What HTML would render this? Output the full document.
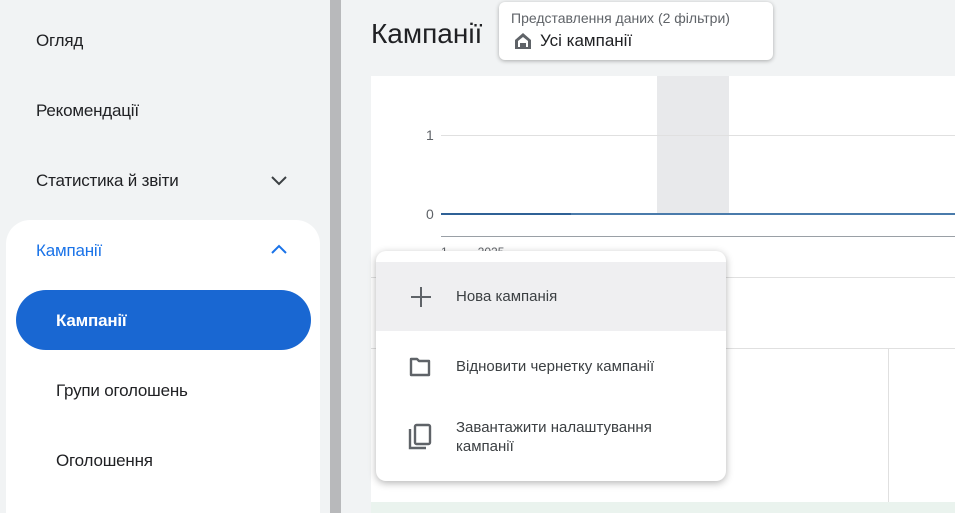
<!DOCTYPE html>
<html><head><meta charset="utf-8"><style>
*{margin:0;padding:0;box-sizing:border-box}
html,body{width:955px;height:513px;overflow:hidden}
body{background:#f1f3f4;font-family:"Liberation Sans",sans-serif;position:relative;color:#202124}
.abs{position:absolute}
.nav{font-size:17px;color:#202124;font-weight:500;letter-spacing:-0.2px}
</style></head><body>
<div class="abs" style="left:0;top:0;width:330px;height:513px;background:#f1f3f4"></div>
<div class="abs nav" style="left:36px;top:31px">Огляд</div>
<div class="abs nav" style="left:36px;top:101px">Рекомендації</div>
<div class="abs nav" style="left:36px;top:171px">Статистика й звіти</div>
<svg class="abs" style="left:270px;top:173px" width="18" height="14" viewBox="0 0 18 14"><path d="M2 4l7 7 7-7" fill="none" stroke="#3c4043" stroke-width="2"/></svg>
<div class="abs" style="left:6px;top:220px;width:314px;height:293px;background:#fff;border-radius:24px 24px 0 0"></div>
<div class="abs nav" style="left:36px;top:241px;color:#1a73e8">Кампанії</div>
<svg class="abs" style="left:270px;top:242px" width="18" height="14" viewBox="0 0 18 14"><path d="M2 11l7-7 7 7" fill="none" stroke="#1a73e8" stroke-width="2"/></svg>
<div class="abs" style="left:16px;top:290px;width:295px;height:60px;background:#1967d2;border-radius:30px"></div>
<div class="abs nav" style="left:56px;top:311px;color:#fff;font-weight:700">Кампанії</div>
<div class="abs nav" style="left:56px;top:381px">Групи оголошень</div>
<div class="abs nav" style="left:56px;top:451px">Оголошення</div>
<div class="abs" style="left:330px;top:0;width:11px;height:513px;background:#b8b9bb"></div>
<div class="abs" style="left:371px;top:18px;font-size:28px;color:#202124">Кампанії</div>
<div class="abs" style="left:371px;top:76px;width:584px;height:437px;background:#fff"></div>
<div class="abs" style="left:657px;top:76px;width:72px;height:138px;background:#e8e9eb"></div>
<div class="abs" style="left:441px;top:135px;width:514px;height:1px;background:#e0e0e0"></div>
<div class="abs" style="left:426px;top:127px;font-size:14px;color:#5f6368">1</div>
<div class="abs" style="left:426px;top:206px;font-size:14px;color:#5f6368">0</div>
<div class="abs" style="left:441px;top:213px;width:514px;height:2px;background:#4a7bab"></div>
<div class="abs" style="left:441px;top:213px;width:130px;height:2px;background:#2f6196"></div>
<div class="abs" style="left:441px;top:236px;width:514px;height:1px;background:#9aa0a6"></div>
<div class="abs" style="left:441px;top:245px;font-size:12px;color:#5f6368">1&nbsp;&nbsp;&nbsp;&nbsp;&nbsp;&nbsp;&nbsp;&nbsp;&nbsp;2025</div>
<div class="abs" style="left:371px;top:277px;width:584px;height:1px;background:#e0e0e0"></div>
<div class="abs" style="left:371px;top:348px;width:584px;height:1px;background:#e0e0e0"></div>
<div class="abs" style="left:888px;top:348px;width:1px;height:165px;background:#e0e0e0"></div>
<div class="abs" style="left:371px;top:502px;width:584px;height:11px;background:#eaf3ee"></div>
<div class="abs" style="left:499px;top:2px;width:274px;height:58px;background:#fff;border-radius:6px;box-shadow:0 1px 4px rgba(0,0,0,.3)"></div>
<div class="abs" style="left:511px;top:10px;font-size:14px;color:#5f6368">Представлення даних (2 фільтри)</div>
<svg class="abs" style="left:514px;top:32px" width="18" height="18" viewBox="0 0 18 18"><path d="M1 8L9 1l8 7v9H1z" fill="#5f6368"/><path d="M4 9l5-4 5 4v6h-2v-4H6v4H4z" fill="#fff"/></svg>
<div class="abs" style="left:540px;top:31px;font-size:17px;color:#202124;font-weight:500">Усі кампанії</div>
<div class="abs" style="left:376px;top:251px;width:350px;height:230px;background:#fff;border-radius:10px;box-shadow:0 2px 8px rgba(0,0,0,.3);overflow:hidden">
<div style="position:absolute;left:0;top:11px;width:350px;height:69px;background:#efeff1"></div>
<svg class="abs" style="left:33px;top:34px" width="24" height="24" viewBox="0 0 24 24"><path d="M12 2v20M2 12h20" stroke="#5f6368" stroke-width="2"/></svg>
<div class="abs" style="left:80px;top:37px;font-size:15px;color:#3c4043">Нова кампанія</div>
<svg class="abs" style="left:32px;top:104px" width="24" height="24" viewBox="0 0 24 24"><path d="M3 4h6l2 2h10v14H3z" fill="none" stroke="#5f6368" stroke-width="2.4" stroke-linejoin="round"/></svg>
<div class="abs" style="left:80px;top:107px;font-size:15px;color:#3c4043">Відновити чернетку кампанії</div>
<svg class="abs" style="left:32px;top:172px" width="24" height="28" viewBox="0 0 24 28"><path d="M2 6v19h16" fill="none" stroke="#5f6368" stroke-width="2.4"/><rect x="7" y="2" width="15" height="19" rx="1.5" fill="none" stroke="#5f6368" stroke-width="2.4"/></svg>
<div class="abs" style="left:80px;top:167px;font-size:15px;color:#3c4043;line-height:19px">Завантажити налаштування<br>кампанії</div>
</div>
</body></html>
